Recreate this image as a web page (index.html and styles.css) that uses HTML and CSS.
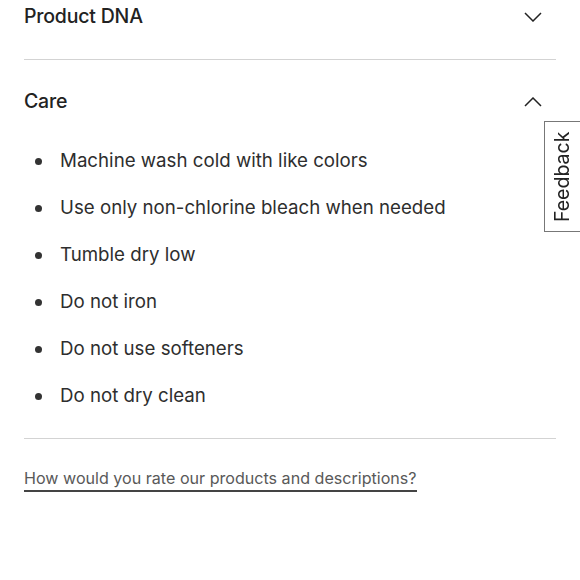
FILE: index.html
```html
<!DOCTYPE html>
<html lang="en">
<head>
<meta charset="utf-8">
<link rel="stylesheet" href="styles.css">
</head>
<body>
<div class="page">
  <section class="acc acc-first">
    <div class="acc-head">
      <h2 class="acc-title">Product DNA</h2>
      <svg class="chev" width="18" height="10" viewBox="0 0 18 10"><path d="M1 1 L9 9 L17 1" fill="none" stroke="#222" stroke-width="1.5"/></svg>
    </div>
  </section>
  <section class="acc">
    <div class="acc-head">
      <h2 class="acc-title">Care</h2>
      <svg class="chev" width="18" height="10" viewBox="0 0 18 10"><path d="M1 9 L9 1 L17 9" fill="none" stroke="#222" stroke-width="1.5"/></svg>
    </div>
    <ul class="care-list">
      <li>Machine wash cold with like colors</li>
      <li>Use only non-chlorine bleach when needed</li>
      <li>Tumble dry low</li>
      <li>Do not iron</li>
      <li>Do not use softeners</li>
      <li>Do not dry clean</li>
    </ul>
  </section>
  <div class="rate">
    <a class="rate-link" href="#">How would you rate our products and descriptions?</a>
  </div>
</div>
<button class="feedback">Feedback</button>
</body>
</html>
```
FILE: styles.css
```css
html, body { margin: 0; padding: 0; background: #fff; }
body { font-family: Inter, "Noto Sans", "Liberation Sans", sans-serif; color: #222; }
.page { padding: 0 24px; }
.acc { border-bottom: 1px solid #d3d3d3; }
.acc-first { margin-top: -25px; }
.acc-head { height: 84px; display: flex; align-items: center; justify-content: space-between; }
.acc-title { margin: 0; font-size: 19.5px; font-weight: 500; letter-spacing: -0.2px; line-height: 24px; padding-bottom: 2px; }
.chev { margin-right: 14px; display: block; }
.care-list { list-style: none; margin: 0; padding: 3px 0 28px 0; display: flex; flex-direction: column; gap: 19px; }
.care-list li { position: relative; padding-left: 36px; font-size: 18.7px; line-height: 28px; color: #2e2e2e; }
.care-list li::before { content: ""; position: absolute; left: 11px; top: 11px; width: 7px; height: 7px; border-radius: 50%; background: #333; }
.rate { padding-top: 27px; }
.rate-link { font-size: 16.1px; line-height: 24px; color: #595959; text-decoration: none; border-bottom: 2px solid #444; padding-bottom: 0; display: inline-block; }
.feedback { position: fixed; right: -1px; top: 121px; width: 37px; height: 111px; padding: 0; background: #fff; border: 1px solid #777; font-family: Inter, "Noto Sans", "Liberation Sans", sans-serif; font-size: 19.5px; color: #222; writing-mode: vertical-rl; transform: rotate(180deg); display: flex; align-items: center; justify-content: center; }
```
